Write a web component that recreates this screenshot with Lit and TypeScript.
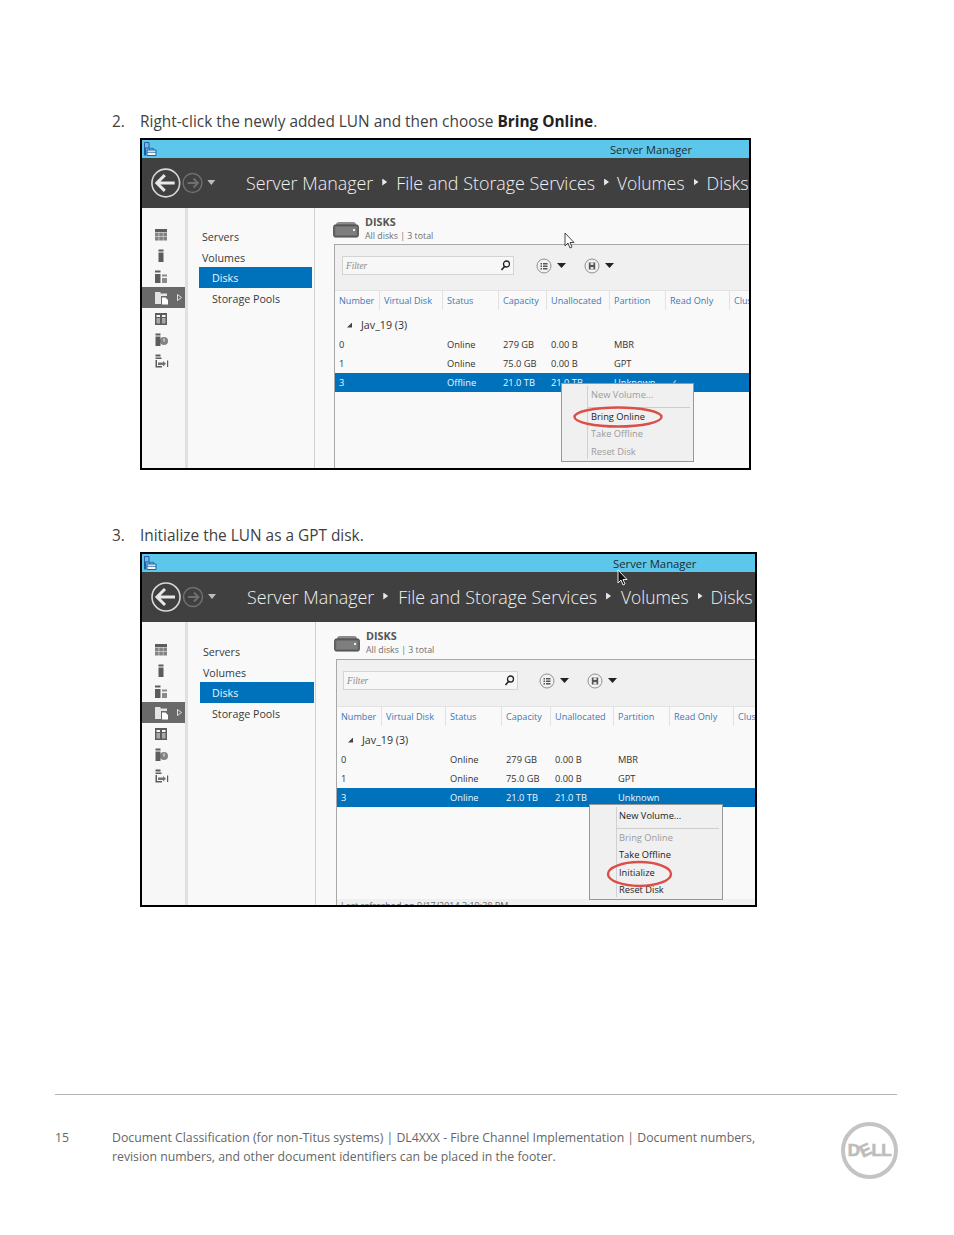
import { LitElement, html, css, svg } from "lit";
import { customElement, property } from "lit/decorators.js";

interface ShotData {
  variant: string;
  cols: string;
  rows: string[][];
  menu: { label: string; enabled: boolean; sep?: boolean }[];
  status: string;
}

const HEAD = ["Number", "Virtual Disk", "Status", "Capacity", "Unallocated", "Partition", "Read Only", "Clus"];

const railIcons = [
  svg`<path d="M2 2h12v3H2z" /><path d="M2 5.500h3.700v3.700H2zM6.200 5.500h3.700v3.700H6.200zM10.300 5.500H14v3.700h-3.700zM2 9.800h3.700v3.700H2zM6.200 9.800h3.700v3.700H6.200zM10.300 9.800H14v3.700h-3.700z" opacity=".75"/>`,
  svg`<path d="M5.500 1.500h5v2h-5zM5.500 4.500h5v9.500h-5z"/>`,
  svg`<path d="M2 1.500h5.500v2H2zM2 5h5.500v9H2z"/><path d="M9 5.500h5v2H9zM9 9h5v5H9z" opacity=".7"/>`,
  svg`<path d="M2 2h5.500v1.500H14V6H8v8H2z" fill="#e4e4e4"/><path d="M9 7.500h3.500L15 10v4.500H9z" fill="#fff"/>`,
  svg`<path d="M2 2h12v12H2z" fill="#5c5c5c"/><path d="M3.500 4h3.500v2H3.500zM9 4h3.500v2H9z" fill="#f7f7f7"/><path d="M3.500 7h3.500v5.500H3.500zM9 7h3.500v5.500H9z" fill="#a8a8a8"/>`,
  svg`<path d="M2.500 1.500h5v2h-5zM2.500 4.500h5V14h-5z"/><circle cx="11" cy="9" r="4" opacity=".75"/><path d="M10.500 6.500h1v3h-1z" fill="#f7f7f7"/>`,
  svg`<path d="M2.500 1.500h5v2h-5zM2.500 4.500h6v1.500h-6zM2.500 7h1.500v6h5v1.500H2.500z"/><path d="M5 9.500h5V8l3 2.700-3 2.700v-1.500H5z" opacity=".85"/><path d="M14 7.500h1.200v6.500H14z"/>`,
];

@customElement("ui-shot")
class UiShot extends LitElement {
  @property({ attribute: false }) data!: ShotData;

  static styles = css`
    :host { display: block; }
    .shot { position: relative; box-sizing: border-box; border: 2px solid #000; display: flex; flex-direction: column; background: #f9f9f9; overflow: hidden; font-family: "Open Sans", sans-serif; font-size: 9.300px; color: #333; margin-left: 140px; }
    .a { width: 611px; height: 332px; }
    .b { width: 617px; height: 355px; }
    .title { height: 18px; flex: none; background: #5cc7ea; display: flex; align-items: center; position: relative; color: #1c2b33; font-size: 11.100px; }
    .title svg { margin-left: 1px; }
    .a .title-text { margin-left: 453px; }
    .b .title-text { margin-left: 456px; font-size: 11.300px; }
    .header { height: 50px; flex: none; background: #404040; display: flex; align-items: center; color: #f2f2f2; font-size: 17.900px; font-weight: 300; white-space: nowrap; }
    .nav-btns { width: 102px; flex: none; display: block; }
    .b .nav-btns { width: 103px; }
    .crumbs { display: flex; align-items: center; margin-left: 2px; }
    .crumbs .v { font-size: 17.400px; }
    .a .crumbs .v, .a .crumbs .d { margin-left: -1px; }
    .b .crumbs .d { margin-left: -2px; }
    .sep { width: 5px; height: 7px; background: #e8e8e8; clip-path: polygon(0 0, 100% 50%, 0 100%); }
    .a .sep { margin: 0 9px 2px 9px; }
    .b .sep { margin: 0 10px 2px 9px; }
    .body { flex: 1; display: flex; min-height: 0; }
    .rail { width: 43px; flex: none; background: #f7f7f7; border-right: 3px solid #e0e0e0; padding-top: 16px; display: flex; flex-direction: column; }
    .b .rail { padding-top: 17px; }
    .rail-item { height: 21px; flex: none; display: flex; align-items: center; padding-left: 11px; position: relative; }
    .rail-item.on { background: #696969; }
    .rail-item svg { fill: #5c5c5c; display: block; }
    .rail-item .tri { position: absolute; right: 3px; top: 7px; width: 5px; height: 7px; }
    .nav { width: 127px; flex: none; background: #f9f9f9; border-right: 1px solid #d0d0d0; box-sizing: border-box; padding-top: 17px; font-size: 10.700px; color: #3a3a3a; }
    .b .nav { width: 128px; padding-top: 18px; }
    .nav div { height: 21px; line-height: 25px; padding-left: 14px; margin-right: 2px; }
    .b .nav div { padding-left: 15px; margin-right: 1px; }
    .nav .sub { margin-left: 11px; padding-left: 13px; line-height: 23px; }
    .b .nav .sub { margin-left: 12px; padding-left: 12px; }
    .nav .sel { background: #0072bc; color: #eaf4fb; }
    .content { flex: 1; min-width: 0; display: flex; flex-direction: column; padding: 0 0 0 18px; }
    .head { height: 36px; flex: none; display: flex; align-items: flex-start; padding-top: 8px; box-sizing: border-box; gap: 6px; }
    .b .head { height: 37px; }
    .head svg { margin-top: 5px; }
    .head h3 { margin: 0; font-size: 10.800px; line-height: 12px; font-weight: 700; color: #555; }
    .head p { margin: 3px 0 0; font-size: 8.800px; line-height: 11px; color: #6e6e6e; }
    .panel { flex: 1; min-height: 0; border-left: 1px solid #a8a8a8; border-top: 1px solid #a8a8a8; margin-left: 1px; display: flex; flex-direction: column; }
    .b .panel { margin-left: 2px; }
    .tools { height: 46px; flex: none; background: #f0f0f0; border-bottom: 1px solid #e2e2e2; box-sizing: border-box; display: flex; align-items: center; padding: 0 0 4px 7px; }
    .b .tools { height: 47px; padding: 0 0 5px 6px; }
    .filter { width: 172px; height: 19px; box-sizing: border-box; border: 1px solid #d4d4d4; background: #f7f7f7; font-size: 9.300px; font-style: italic; color: #8a8a8a; display: flex; align-items: center; justify-content: space-between; padding: 0 2px 0 3px; font-family: "Liberation Serif", serif; }
    .b .filter { width: 175px; }
    .round { margin-left: 22px; display: flex; align-items: center; gap: 5px; }
    .b .round { margin-left: 21px; }
    .round + .round, .b .round + .round { margin-left: 18px; }
    .grid { display: grid; height: 19px; align-items: center; white-space: nowrap; }
    .grid > span { overflow: hidden; padding-left: 4px; height: 100%; line-height: 19px; box-sizing: border-box; }
    .cols { color: #3d78b5; font-size: 9.100px; margin-bottom: 5px; flex: none; }
    .b .cols { margin-bottom: 4px; }
    .cols > span { border-right: 1px solid #e2e2e2; }
    .cols > span:last-child { border-right: 0; }
    .group { height: 20px; line-height: 20px; display: flex; align-items: center; gap: 9px; padding-left: 12px; color: #333; font-size: 10.700px; flex: none; }
    .b .group { padding-left: 11px; }
    .group i { width: 5px; height: 5px; background: #444; clip-path: polygon(100% 0, 100% 100%, 0 100%); }
    .row { flex: none; }
    .row.hi { background: #0072bc; color: #eef6fb; }
    .status { margin-top: auto; height: 6px; background: #f0f0f0; overflow: hidden; font-size: 9px; line-height: 14px; padding-left: 4px; color: #666; flex: none; }
    .menu { position: absolute; box-sizing: border-box; border: 1px solid #979797; background: #f0f0f0; padding: 1px 3px 0 25px; color: #222; font-size: 9.300px; }
    .a .menu { left: 419px; top: 243px; width: 133px; height: 79px; }
    .b .menu { left: 447px; top: 250px; width: 134px; height: 96px; padding-left: 26px; }
    .rule { position: absolute; left: 25px; top: 2px; bottom: 2px; width: 1px; background: #d0d0d0; }
    .b .rule { left: 26px; }
    .item { padding-left: 4px; height: 17.500px; line-height: 17.500px; white-space: nowrap; }
    .item.off { color: #9b9b9b; }
    .item.after-sep { border-top: 1px solid #cdcdcd; margin-top: 1px; }
    .item:first-child, .rule + .item { height: 20.500px; line-height: 20.500px; }
    .b .item { padding-left: 3px; }
    .ring { position: absolute; fill: none; stroke: #dc4f48; stroke-width: 2.400; }
    .a .ring { left: 431px; top: 266px; }
    .b .ring { left: 464px; top: 306px; }
    .cursor { position: absolute; }
    .a .cursor { left: 422px; top: 92px; }
    .b .cursor { left: 475px; top: 15px; }
  `;

  render() {
    const d = this.data;
    const isA = d.variant === "a";
    const onIdx = 3;
    return html`<div class="shot ${d.variant}">
      <div class="title">
        <svg width="14" height="16" viewBox="0 0 14 16"><path d="M1.500 1.500h4.500v5.500H1.500z" fill="#7fb4dc" stroke="#1f5fa8"/><path d="M1 7h2v7.500H1z" fill="#1f5fa8"/><path d="M4 9h9v5.500H4z" fill="#f5f5f5" stroke="#1f5fa8"/><path d="M6.500 9V7.300h4V9M4 11.300h9" fill="none" stroke="#1f5fa8" stroke-width=".8"/></svg>
        <span class="title-text">Server Manager</span>
      </div>
      <div class="header">
        <svg class="nav-btns" height="40" viewBox="0 0 103 40">
          <circle cx="24" cy="20" r="14" fill="none" stroke="#d8d8d8" stroke-width="1.600"/>
          <path d="M15 20h18M23 12l-8 8 8 8" fill="none" stroke="#e8e8e8" stroke-width="3"/>
          <circle cx="51" cy="20" r="9.500" fill="none" stroke="#6f6f6f" stroke-width="1.500"/>
          <path d="M46 20h10M52 15.500l4.500 4.500-4.500 4.500" fill="none" stroke="#6f6f6f" stroke-width="2"/>
          <path d="M66 17h8l-4 5z" fill="#bdbdbd"/>
        </svg>
        <div class="crumbs">
          <span>Server Manager</span><i class="sep"></i><span>File and Storage Services</span><i class="sep"></i><span class="v">Volumes</span><i class="sep"></i><span class="d">Disks</span>
        </div>
      </div>
      <div class="body">
        <div class="rail">
          ${railIcons.map(
            (p, i) => html`<div class="rail-item ${i === onIdx ? "on" : ""}">
              <svg width="16" height="16" viewBox="0 0 16 16">${p}</svg>
              ${i === onIdx ? html`<svg class="tri" viewBox="0 0 5 7"><path d="M.5.500l4 3-4 3z" fill="#696969" stroke="#fff" stroke-width=".8"/></svg>` : ""}
            </div>`
          )}
        </div>
        <div class="nav">
          <div>Servers</div>
          <div>Volumes</div>
          <div class="sub sel">Disks</div>
          <div class="sub">Storage Pools</div>
        </div>
        <div class="content">
          <div class="head">
            <svg width="26" height="17" viewBox="0 0 26 17"><path d="M3 4q0-3 3-3h14q3 0 3 3z" fill="#8c8c8c"/><rect x=".7" y="4" width="24.600" height="12" rx="1.500" fill="#6d6d6d" stroke="#444"/><rect x="2.500" y="6" width="21" height="8" fill="#7e7e7e"/><rect x="20" y="8" width="2" height="2" fill="#eee"/></svg>
            <div><h3>DISKS</h3><p>All disks | 3 total</p></div>
          </div>
          <div class="panel">
            <div class="tools">
              <div class="filter"><span>Filter</span>
                <svg width="11" height="11" viewBox="0 0 11 11"><circle cx="6.500" cy="4" r="3" fill="none" stroke="#222" stroke-width="1.300"/><path d="M4.500 6.500L1.500 10" stroke="#222" stroke-width="1.600"/></svg>
              </div>
              <div class="round">
                <svg width="16" height="16" viewBox="0 0 16 16"><circle cx="8" cy="8" r="7" fill="#f2f2f2" stroke="#8f8f8f"/><path d="M4.500 5h1.500v1.500H4.500zM7 5h4.500v1.500H7zM4.500 7.500h1.500V9H4.500zM7 7.500h4.500V9H7zM4.500 10h1.500v1.500H4.500zM7 10h4.500v1.500H7z" fill="#555"/></svg>
                <svg width="9" height="5" viewBox="0 0 9 5"><path d="M0 0h9L4.500 5z" fill="#222"/></svg>
              </div>
              <div class="round">
                <svg width="16" height="16" viewBox="0 0 16 16"><circle cx="8" cy="8" r="7" fill="#f2f2f2" stroke="#8f8f8f"/><path d="M4.800 4.500h6.400v7H4.800z" fill="#555"/><path d="M6.500 4.500h3V7h-3zM6.500 9h3v2.500h-3z" fill="#ddd"/></svg>
                <svg width="9" height="5" viewBox="0 0 9 5"><path d="M0 0h9L4.500 5z" fill="#222"/></svg>
              </div>
            </div>
            <div class="grid cols" style="grid-template-columns:${d.cols}">${HEAD.map((h) => html`<span>${h}</span>`)}</div>
            <div class="group"><i></i><span>Jav_19 (3)</span></div>
            ${d.rows.map(
              (r, i) => html`<div class="grid row ${i === 2 ? "hi" : ""}" style="grid-template-columns:${d.cols}">${r.map((c) => html`<span>${c}</span>`)}</div>`
            )}
            ${d.status ? html`<div class="status">${d.status}</div>` : ""}
          </div>
        </div>
      </div>
      <div class="menu">
        <div class="rule"></div>
        ${d.menu.map((m) => html`<div class="item ${m.enabled ? "" : "off"} ${m.sep ? "after-sep" : ""}">${m.label}</div>`)}
      </div>
      ${isA
        ? html`<svg class="ring" width="90" height="22" viewBox="0 0 90 22"><ellipse cx="45" cy="11" rx="43.500" ry="9.500"/></svg>`
        : html`<svg class="ring" width="67" height="28" viewBox="0 0 67 28"><ellipse cx="33.500" cy="14" rx="31.500" ry="12"/></svg>`}
      <svg class="cursor" width="11" height="17" viewBox="0 0 11 17">
        <path d="M1 1v13l3-3 2 5 2-1-2-4.500h4z" fill="${isA ? "#fff" : "#111"}" stroke="${isA ? "#333" : "#fff"}" stroke-width=".9"/>
      </svg>
    </div>`;
  }
}

const cols1 = "45px 63px 56px 48px 63px 56px 64px 1fr";
const cols2 = "45px 64px 56px 49px 63px 56px 64px 1fr";

const shotA: ShotData = {
  variant: "a",
  cols: cols1,
  rows: [
    ["0", "", "Online", "279 GB", "0.00 B", "MBR", "", ""],
    ["1", "", "Online", "75.0 GB", "0.00 B", "GPT", "", ""],
    ["3", "", "Offline", "21.0 TB", "21.0 TB", "Unknown", "\u2713", ""],
  ],
  menu: [
    { label: "New Volume...", enabled: false },
    { label: "Bring Online", enabled: true, sep: true },
    { label: "Take Offline", enabled: false },
    { label: "Reset Disk", enabled: false },
  ],
  status: "",
};

const shotB: ShotData = {
  variant: "b",
  cols: cols2,
  rows: [
    ["0", "", "Online", "279 GB", "0.00 B", "MBR", "", ""],
    ["1", "", "Online", "75.0 GB", "0.00 B", "GPT", "", ""],
    ["3", "", "Online", "21.0 TB", "21.0 TB", "Unknown", "", ""],
  ],
  menu: [
    { label: "New Volume...", enabled: true },
    { label: "Bring Online", enabled: false, sep: true },
    { label: "Take Offline", enabled: true },
    { label: "Initialize", enabled: true },
    { label: "Reset Disk", enabled: true },
  ],
  status: "Last refreshed on 9/17/2014 3:19:38 PM",
};

@customElement("app-root")
class AppRoot extends LitElement {
  static styles = css`
    :host { display: block; }
    .page { box-sizing: border-box; width: 954px; height: 1235px; padding-top: 111px; background: #fff; font-family: "Open Sans", sans-serif; color: #3f3f3f; display: flex; flex-direction: column; overflow: hidden; }
    .step { display: flex; height: 20px; line-height: 21px; padding-left: 112px; font-size: 15.400px; white-space: nowrap; margin-bottom: 7px; font-weight: 400; }
    .step .n { width: 28px; flex: none; }
    .step b { font-weight: 700; color: #222; }
    .gap { height: 55px; flex: none; }
    .foot { margin-top: auto; margin-bottom: 56px; margin-left: 55px; margin-right: 57px; border-top: 1px solid #b4b4b4; padding-top: 33px; display: flex; position: relative; font-size: 12.270px; line-height: 19px; color: #666; height: 51px; }
    .num { width: 57px; flex: none; }
    .txt { width: 670px; }
    .logo { position: absolute; right: -1px; top: 27px; width: 57px; height: 57px; box-sizing: border-box; border: 4px solid #c4c4c4; border-radius: 50%; display: flex; align-items: center; justify-content: center; font-family: "Liberation Sans", sans-serif; font-weight: 700; font-size: 17px; line-height: 1; color: #bcbcbc; letter-spacing: -.5px; -webkit-text-stroke: .6px #bcbcbc; }
    .logo span { display: inline-block; }
    .logo .e { transform: rotate(-25deg); margin: 0 .5px; }
  `;

  render() {
    return html`<div class="page">
      <div class="step"><span class="n">2.</span><span>Right-click the newly added LUN and then choose <b>Bring Online</b>.</span></div>
      <ui-shot .data=${shotA}></ui-shot>
      <div class="gap"></div>
      <div class="step"><span class="n">3.</span><span>Initialize the LUN as a GPT disk.</span></div>
      <ui-shot .data=${shotB}></ui-shot>
      <div class="foot">
        <div class="num">15</div>
        <div class="txt">Document Classification (for non-Titus systems) | DL4XXX - Fibre Channel Implementation | Document numbers, revision numbers, and other document identifiers can be placed in the footer.</div>
        <div class="logo"><span>D</span><span class="e">E</span><span>LL</span></div>
      </div>
    </div>`;
  }
}
